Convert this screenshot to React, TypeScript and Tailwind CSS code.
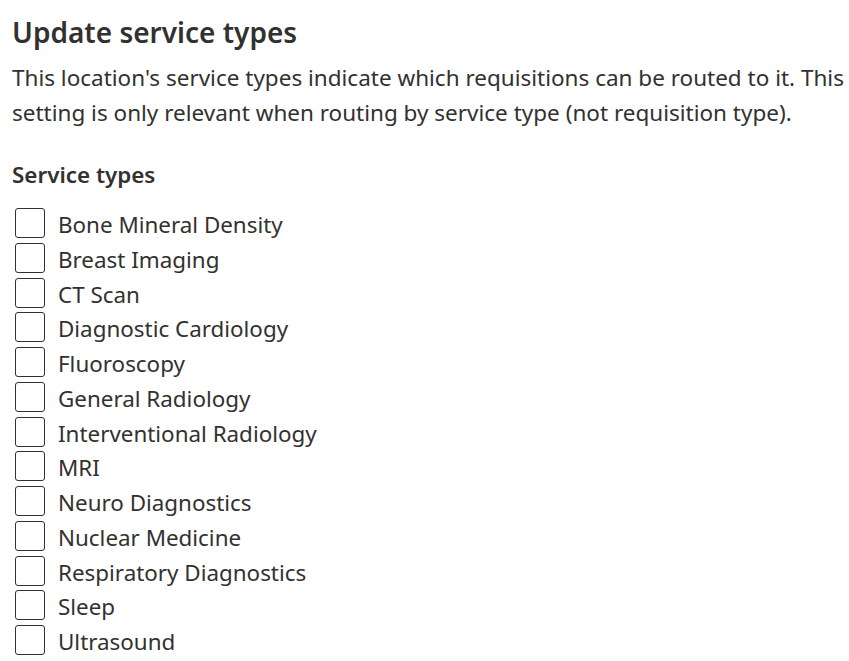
const serviceTypes = [
  "Bone Mineral Density",
  "Breast Imaging",
  "CT Scan",
  "Diagnostic Cardiology",
  "Fluoroscopy",
  "General Radiology",
  "Interventional Radiology",
  "MRI",
  "Neuro Diagnostics",
  "Nuclear Medicine",
  "Respiratory Diagnostics",
  "Sleep",
  "Ultrasound",
];

function ServiceCheckbox({ label }: { label: string }) {
  return (
    <label className="flex h-[30px] cursor-pointer items-center">
      <span className="ml-[3px] box-border h-[30px] w-[30px] shrink-0 rounded-[3px] border-[1.5px] border-[#323130] bg-white" />
      <span className="ml-[13px] mt-[4px] text-[22.4px] leading-[30px] text-[#323130]">
        {label}
      </span>
    </label>
  );
}

export default function App() {
  return (
    <div
      className="min-h-screen bg-white px-3 pt-[12px] text-[#323130]"
      style={{ fontFamily: '"Noto Sans", "Open Sans", sans-serif' }}
    >
      <h1 className="text-[28px] font-semibold leading-[40px]">
        Update service types
      </h1>
      <p className="mt-[8px] text-[22.5px] leading-[35px] whitespace-nowrap">
        This location's service types indicate which requisitions can be routed
        to it. This
        <br />
        setting is only relevant when routing by service type (not requisition
        type).
      </p>

      <h2 className="mt-[30px] text-[22.4px] font-semibold leading-[30px]">
        Service types
      </h2>
      <div className="mt-[18px] flex flex-col gap-[4.75px]">
        {serviceTypes.map((type) => (
          <ServiceCheckbox key={type} label={type} />
        ))}
      </div>
    </div>
  );
}
